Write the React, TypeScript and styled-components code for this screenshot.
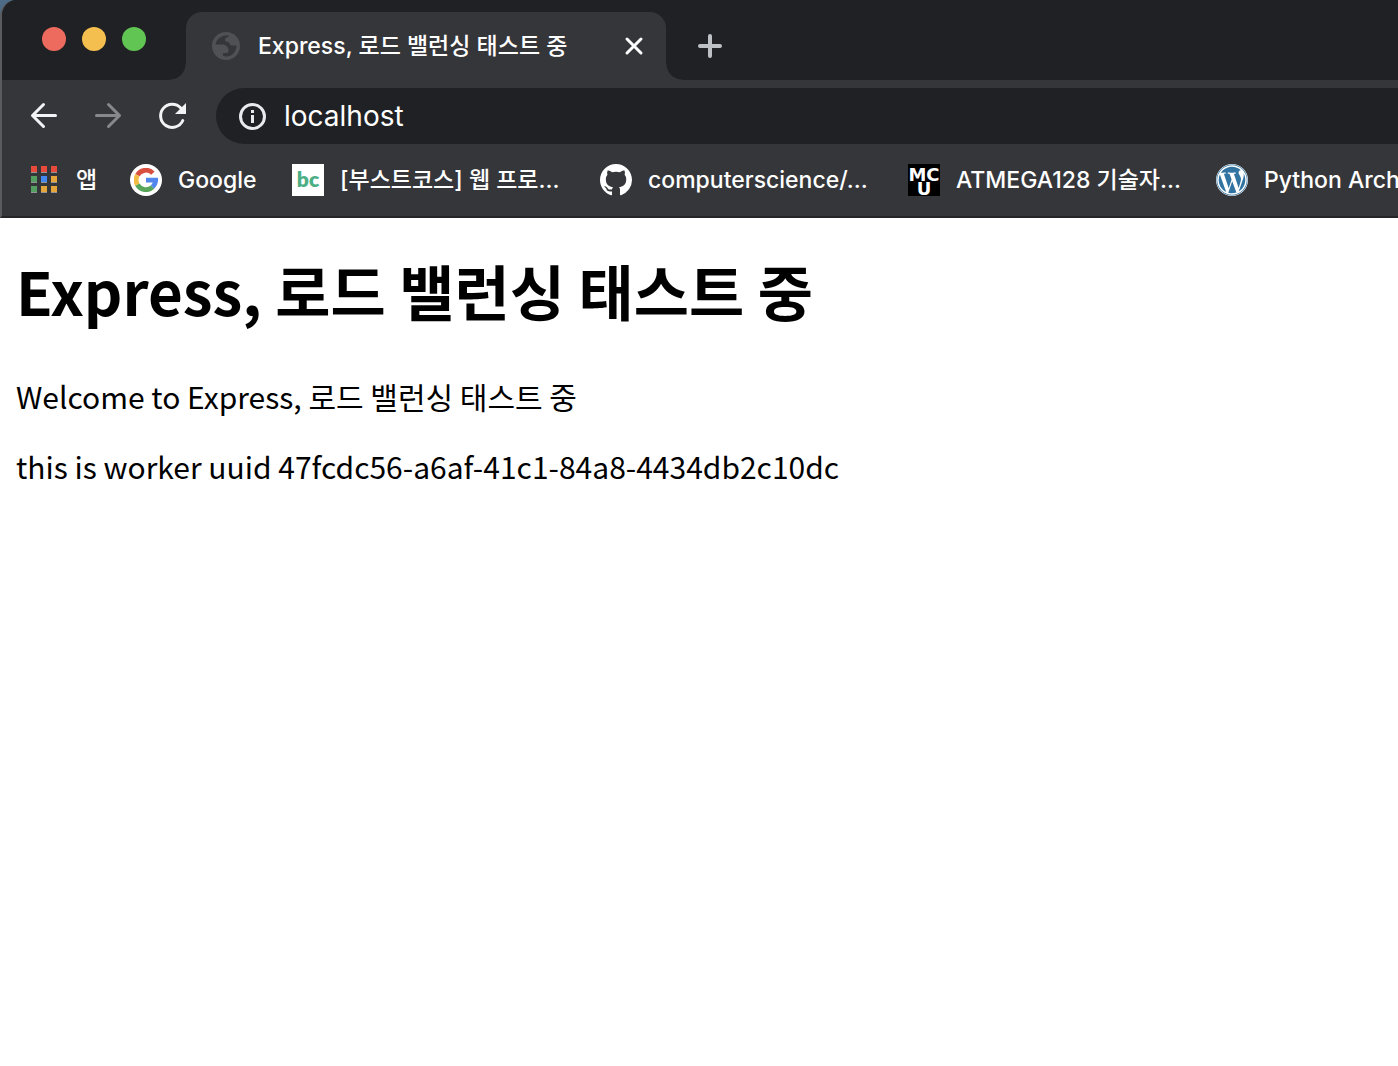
import React, { useState } from "react";
import styled, { createGlobalStyle } from "styled-components";
import { FaWordpress } from "react-icons/fa";
import { BsGithub } from "react-icons/bs";

const GlobalStyle = createGlobalStyle`
  *, *::before, *::after { box-sizing: border-box; }
  body { margin: 0; background: #ffffff; overflow-x: hidden; }
`;

const uiFont = `Inter, "Noto Sans CJK KR", sans-serif`;
const pageFont = `"Noto Sans CJK KR", sans-serif`;

const Backdrop = styled.header`
  background: #4d6a87;
`;

const Chrome = styled.div`
  border-left: 2px solid #5a5b5e;
  border-top-left-radius: 16px;
  border-bottom: 2px solid #252528;
  background: #35363a;
  color: #ffffff;
  font-family: ${uiFont};
  font-weight: 500;
  overflow: hidden;
`;

const TabStrip = styled.div`
  display: flex;
  align-items: flex-end;
  height: 80px;
  background: #202124;
`;

const WindowControls = styled.div`
  display: flex;
  flex: none;
  align-self: flex-start;
  gap: 16px;
  width: 184px;
  padding: 27px 0 0 40px;
`;

const Light = styled.button<{ $color: string }>`
  width: 24px;
  height: 24px;
  padding: 0;
  border: 0;
  border-radius: 50%;
  background: ${(p) => p.$color};
`;

const Tab = styled.div`
  position: relative;
  display: flex;
  align-items: center;
  flex: 0 1 480px;
  height: 68px;
  padding: 0 20px 0 26px;
  border-radius: 16px 16px 0 0;
  background: #35363a;

  &::before,
  &::after {
    content: "";
    position: absolute;
    bottom: 0;
    width: 16px;
    height: 16px;
  }
  &::before {
    right: 100%;
    background: radial-gradient(circle at 0 0, transparent 15px, #35363a 16px);
  }
  &::after {
    left: 100%;
    background: radial-gradient(circle at 100% 0, transparent 15px, #35363a 16px);
  }
`;

const TabTitle = styled.span`
  flex: 1;
  margin-left: 18px;
  font-size: 23px;
  line-height: 32px;
  white-space: nowrap;
`;

const IconButton = styled.button<{ $size: number; $color: string }>`
  display: flex;
  align-items: center;
  justify-content: center;
  flex: none;
  width: ${(p) => p.$size}px;
  height: ${(p) => p.$size}px;
  padding: 0;
  border: 0;
  background: none;
  color: ${(p) => p.$color};
`;

const NewTab = styled(IconButton)`
  margin: 0 0 14px 24px;
`;

const Toolbar = styled.div`
  display: flex;
  align-items: center;
  gap: 24px;
  padding: 8px 0 0 22px;
`;

const Omnibox = styled.label`
  display: flex;
  align-items: center;
  flex: 1;
  gap: 18px;
  height: 56px;
  padding-left: 22px;
  border-radius: 28px 0 0 28px;
  background: #202124;
`;

const Address = styled.input`
  flex: 1;
  min-width: 0;
  height: 40px;
  padding: 0;
  border: 0;
  outline: 0;
  background: none;
  color: #ffffff;
  font-family: ${uiFont};
  font-size: 28px;
`;

const Bookmarks = styled.nav`
  display: flex;
  align-items: center;
  height: 72px;
  padding-left: 26px;
  overflow: hidden;
`;

const Bookmark = styled.a<{ $width: number }>`
  display: flex;
  align-items: center;
  flex: none;
  gap: 16px;
  width: ${(p) => p.$width}px;
  color: #ffffff;
  font-size: 23px;
  line-height: 32px;
  text-decoration: none;
  white-space: nowrap;
`;

const Favicon = styled.span<{ $bg?: string; $round?: boolean }>`
  display: flex;
  flex-direction: column;
  align-items: center;
  justify-content: center;
  flex: none;
  width: 32px;
  height: 32px;
  border-radius: ${(p) => (p.$round ? "50%" : "0")};
  background: ${(p) => p.$bg ?? "transparent"};
`;

const BoostMark = styled.span`
  height: 32px;
  color: #4caf84;
  font: 800 21px/30px Lato, sans-serif;
`;

const McuFavicon = styled(Favicon)`
  justify-content: flex-end;
`;

const McuLine = styled.span`
  color: #ffffff;
  font: 700 18px/14px "DejaVu Sans", sans-serif;
`;

const Page = styled.main`
  padding: 28px 16px;
  color: #000000;
  font-family: ${pageFont};
`;

const Heading = styled.h1`
  margin: 0 0 42px;
  font-size: 60px;
  font-weight: 700;
  line-height: 88px;
`;

const Paragraph = styled.p`
  margin: 0 0 30px;
  font-size: 30px;
  line-height: 40px;
`;

const Globe = () => (
  <svg width="28" height="28" viewBox="0 0 28 28" fill="none" aria-hidden="true">
    <circle cx="14" cy="14" r="14" fill="#505155" />
    <path
      d="M3.500 12.500C4.500 7.500 8.500 4 13.500 3.500h3.500c-.5 2-3.500 1.800-4 4-.3 1.700 1 2.500 3 2.500 1.500 0 1.500 3 3.500 3.500 2 .4 4-.5 5 .5 0 5.500-4.500 10.500-10 10.500-1.500 0-3-.3-3.500-.8v-2.700h3.500c1.500 0 2-1 2-2.500 0-3.500-2.500-6-6-6z"
      fill="#35363a"
    />
  </svg>
);

const Stroke = ({ d, size = 32, width = 3 }: { d: string; size?: number; width?: number }) => (
  <svg width={size} height={size} viewBox={`0 0 ${size} ${size}`} fill="none" stroke="currentColor" strokeWidth={width} strokeLinecap="round" strokeLinejoin="round" aria-hidden="true">
    <path d={d} />
  </svg>
);

const Reload = () => (
  <svg width="40" height="40" viewBox="0 0 40 40" fill="none" aria-hidden="true">
    <path d="M30.8 24.500A11.6 11.6 0 1 1 28.800 12" stroke="currentColor" strokeWidth="3" strokeLinecap="round" />
    <path d="M34 7v11H23z" fill="currentColor" />
  </svg>
);

const Info = () => (
  <svg width="28" height="28" viewBox="0 0 28 28" fill="none" aria-hidden="true">
    <circle cx="14.500" cy="14.500" r="12" stroke="#e8eaed" strokeWidth="3" />
    <path d="M13 8h3v3h-3zM13 13h3v8h-3z" fill="#e8eaed" />
  </svg>
);

const appColors = ["#e84b3c", "#e84b3c", "#e84b3c", "#549e62", "#4587f0", "#e6a53a", "#549e62", "#e6a53a", "#e6a53a"];

const AppsGrid = () => (
  <svg width="32" height="32" viewBox="0 0 32 32" aria-hidden="true">
    {appColors.map((color, i) => {
      const x = 3 + (i % 3) * 10;
      const y = 2 + Math.floor(i / 3) * 10;
      return (
        <g key={i}>
          <rect x={x} y={y} width="6" height="7" fill="#929397" />
          <rect x={x} y={y} width="6" height="6" fill={color} />
        </g>
      );
    })}
  </svg>
);

const GoogleG = () => (
  <svg width="24" height="24" viewBox="0 0 24 24" fill="none" strokeWidth="4.8" aria-hidden="true">
    <path d="M3.4 7.2A9.7 9.7 0 0 1 18.9 5.2" stroke="#d95040" />
    <path d="M3.4 16.8A9.7 9.7 0 0 1 3.4 7.2" stroke="#f2bd42" />
    <path d="M18.6 19A9.7 9.7 0 0 1 3.4 16.8" stroke="#58a65c" />
    <path d="M12 12.200h9.7a9.7 9.7 0 0 1-3.1 6.800" stroke="#5186ec" />
  </svg>
);

export default function App() {
  const [address, setAddress] = useState("localhost");

  return (
    <>
      <GlobalStyle />
      <Backdrop>
        <Chrome>
          <TabStrip>
            <WindowControls>
              <Light $color="#ed6a5e" aria-label="Close window" />
              <Light $color="#f5bf4f" aria-label="Minimize window" />
              <Light $color="#61c554" aria-label="Zoom window" />
            </WindowControls>
            <Tab>
              <Globe />
              <TabTitle>Express, 로드 밸런싱 태스트 중</TabTitle>
              <IconButton $size={24} $color="#ffffff" aria-label="Close tab">
                <Stroke size={24} d="M5 5l14 14M19 5L5 19" />
              </IconButton>
            </Tab>
            <NewTab $size={40} $color="#bdc1c6" aria-label="New tab">
              <Stroke d="M16 6v20M6 16h20" width={4} />
            </NewTab>
          </TabStrip>
          <Toolbar>
            <IconButton $size={40} $color="#f1f3f4" aria-label="Back">
              <Stroke d="M27.500 15.500H4.500M15.500 4.500l-11 11 11 11" />
            </IconButton>
            <IconButton $size={40} $color="#87888b" aria-label="Forward">
              <Stroke d="M4.500 15.500h23M16.500 4.500l11 11-11 11" />
            </IconButton>
            <IconButton $size={40} $color="#f1f3f4" aria-label="Reload">
              <Reload />
            </IconButton>
            <Omnibox>
              <Info />
              <Address aria-label="Address" value={address} onChange={(e) => setAddress(e.target.value)} />
            </Omnibox>
          </Toolbar>
          <Bookmarks aria-label="Bookmarks">
            <Bookmark href="#apps" $width={102}>
              <AppsGrid />
              앱
            </Bookmark>
            <Bookmark href="#google" $width={162}>
              <Favicon $bg="#ffffff" $round><GoogleG /></Favicon>
              Google
            </Bookmark>
            <Bookmark href="#boostcourse" $width={308}>
              <Favicon $bg="#ffffff"><BoostMark>bc</BoostMark></Favicon>
              [부스트코스] 웹 프로...
            </Bookmark>
            <Bookmark href="#computerscience" $width={308}>
              <Favicon><BsGithub size={32} /></Favicon>
              computerscience/...
            </Bookmark>
            <Bookmark href="#atmega128" $width={308}>
              <McuFavicon $bg="#000000">
                <McuLine>MC</McuLine>
                <McuLine>U</McuLine>
              </McuFavicon>
              ATMEGA128 기술자...
            </Bookmark>
            <Bookmark href="#python" $width={308}>
              <Favicon $bg="#ffffff" $round><FaWordpress size={32} color="#3274a1" /></Favicon>
              Python Arch
            </Bookmark>
          </Bookmarks>
        </Chrome>
      </Backdrop>
      <Page>
        <Heading>Express, 로드 밸런싱 태스트 중</Heading>
        <Paragraph>Welcome to Express, 로드 밸런싱 태스트 중</Paragraph>
        <Paragraph>this is worker uuid 47fcdc56-a6af-41c1-84a8-4434db2c10dc</Paragraph>
      </Page>
    </>
  );
}
